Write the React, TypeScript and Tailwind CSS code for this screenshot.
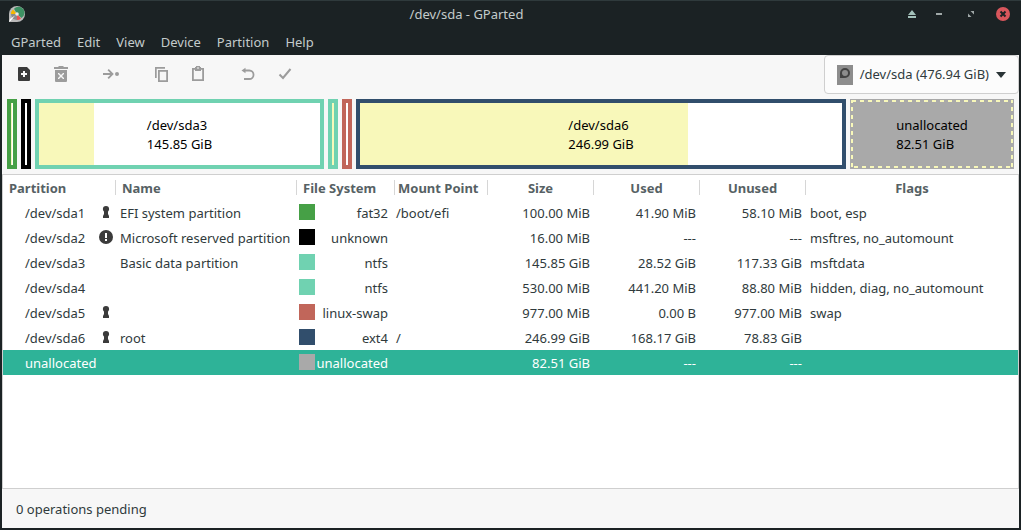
import React from "react";

type Row = {
  partition: string;
  mark?: "key" | "alert";
  name: string;
  swatch: string;
  fs: string;
  mount: string;
  size: string;
  used: string;
  unused: string;
  flags: string;
  selected?: boolean;
};

const rows: Row[] = [
  { partition: "/dev/sda1", mark: "key", name: "EFI system partition", swatch: "bg-[#46a046]", fs: "fat32", mount: "/boot/efi", size: "100.00 MiB", used: "41.90 MiB", unused: "58.10 MiB", flags: "boot, esp" },
  { partition: "/dev/sda2", mark: "alert", name: "Microsoft reserved partition", swatch: "bg-black", fs: "unknown", mount: "", size: "16.00 MiB", used: "---", unused: "---", flags: "msftres, no_automount" },
  { partition: "/dev/sda3", name: "Basic data partition", swatch: "bg-[#70d2b1]", fs: "ntfs", mount: "", size: "145.85 GiB", used: "28.52 GiB", unused: "117.33 GiB", flags: "msftdata" },
  { partition: "/dev/sda4", name: "", swatch: "bg-[#70d2b1]", fs: "ntfs", mount: "", size: "530.00 MiB", used: "441.20 MiB", unused: "88.80 MiB", flags: "hidden, diag, no_automount" },
  { partition: "/dev/sda5", mark: "key", name: "", swatch: "bg-[#c1665a]", fs: "linux-swap", mount: "", size: "977.00 MiB", used: "0.00 B", unused: "977.00 MiB", flags: "swap" },
  { partition: "/dev/sda6", mark: "key", name: "root", swatch: "bg-[#314e6c]", fs: "ext4", mount: "/", size: "246.99 GiB", used: "168.17 GiB", unused: "78.83 GiB", flags: "" },
  { partition: "unallocated", name: "", swatch: "bg-[#a9a9a9]", fs: "unallocated", mount: "", size: "82.51 GiB", used: "---", unused: "---", flags: "", selected: true },
];

const menus = ["GParted", "Edit", "View", "Device", "Partition", "Help"];

function AppIcon() {
  return (
    <svg width="16" height="16" viewBox="0 0 16 16" aria-hidden="true">
      <path d="M0 16V8a8 8 0 1 1 8 8z" fill="#b9b9b9" />
      <path d="M8 8 5 2.800A6 6 0 1 1 12.500 12z" fill="#3d9163" />
      <path d="M8 8 2 8A6 6 0 0 1 4 3.500z" fill="#f5b800" />
      <path d="M8 8l4 4.500A6 6 0 0 1 8 14z" fill="#f0524f" />
      <path d="M8 8H2A6 6 0 0 0 8 14z" fill="#8b8b8b" />
      <circle cx="8" cy="8" r="1.800" fill="#e8e8e8" />
      <path d="M0 16l1-3 5-3.500L2 14.500z" fill="#fff" />
    </svg>
  );
}

function TitleBar() {
  return (
    <header className="flex h-7 items-center bg-[#1b2224] pl-[9px] pr-2.5 shadow-[inset_0_1px_0_#2f3a3c]">
      <AppIcon />
      <h1 className="flex-1 pl-1 text-center text-[13px] leading-5 text-[#c3cbcb]">/dev/sda - GParted</h1>
      <div className="flex items-center gap-4">
        <div className="flex gap-[11px]">
          <button aria-label="Keep above" className="flex h-4 w-4 items-center justify-center">
            <svg width="8" height="8" viewBox="0 0 8 8"><path d="M4 0l4 5H0zM0 6h8v2H0z" fill="#a3c1ba" /></svg>
          </button>
          <button aria-label="Minimize" className="flex h-4 w-4 items-center justify-center">
            <svg width="6" height="8" viewBox="0 0 6 8"><path d="M0 3h6v2H0z" fill="#a0a8a8" /></svg>
          </button>
        </div>
        <button aria-label="Maximize" className="flex h-4 w-4 items-center justify-center">
          <svg width="6" height="6" viewBox="0 0 6 6"><path d="M2.500 0H6v3.500zM0 2.500V6h3.500z" fill="#a0a8a8" /></svg>
        </button>
        <button aria-label="Close" className="flex h-4 w-4 items-center justify-center">
          <svg width="14" height="14" viewBox="0 0 14 14"><circle cx="7" cy="7" r="7" fill="#d8565c" /><path d="M4.500 4.500l5 5M9.500 4.500l-5 5" stroke="#1b2224" strokeWidth="2" /></svg>
        </button>
      </div>
    </header>
  );
}

function ToolButton({ label, disabled, children }: { label: string; disabled?: boolean; children: React.ReactNode }) {
  return (
    <button
      aria-label={label}
      disabled={disabled}
      className="flex h-[38px] w-9 items-center justify-center text-[#3b3b3b] disabled:text-[#9c9c9c]"
    >
      <svg width="16" height="16" viewBox="0 0 16 16" fill="currentColor">{children}</svg>
    </button>
  );
}

function Toolbar() {
  return (
    <div className="flex h-[39px] items-start justify-between pl-1">
      <div className="flex gap-px">
        <ToolButton label="New">
          <path fillRule="evenodd" d="M3 1h8l3 3v10q0 1-1 1H3q-1 0-1-1V2q0-1 1-1zm4 4v2H5v2h2v2h2V9h2V7H9V5z" />
        </ToolButton>
        <ToolButton label="Delete" disabled>
          <path d="M1 1h4l1-1h4l1 1h4v2H1z" />
          <path fillRule="evenodd" d="M2 4h12v11q0 1-1 1H3q-1 0-1-1zm3 4 2 2-2 2v1h1l2-2 2 2h1v-1l-2-2 2-2V7h-1L8 9 6 7H5z" />
        </ToolButton>
        <span className="w-3" />
        <ToolButton label="Resize or move" disabled>
          <path d="M0 7h7.200L4.500 4.300 5.800 3l5 5-5 5-1.300-1.300L7.200 9H0z" />
          <circle cx="14" cy="8" r="2" />
        </ToolButton>
        <span className="w-3" />
        <ToolButton label="Copy" disabled>
          <path d="M2 1h10v1.700H3.700V12H2z" />
          <path fillRule="evenodd" d="M5 4h10v12H5zm1.800 1.800v8.400h6.400V5.800z" />
        </ToolButton>
        <ToolButton label="Paste" disabled>
          <path fillRule="evenodd" d="M2 2h3V1h1V0h4v1h1v1h3v13H2zm1.800 1.800v9.400h8.400V3.800H11V5H5V3.800zM7 1.500v1h2v-1z" />
        </ToolButton>
        <span className="w-3" />
        <ToolButton label="Undo" disabled>
          <path d="M1.500 4.500 5.500 1.700v5.600z" />
          <path d="M5 4.500h4.300a4.200 4.200 0 0 1 0 8.500H4" fill="none" stroke="currentColor" strokeWidth="1.800" />
        </ToolButton>
        <ToolButton label="Apply" disabled>
          <path d="M2.500 8.500l3.500 3.500 7.500-9" fill="none" stroke="currentColor" strokeWidth="2" />
        </ToolButton>
      </div>
      <button className="flex h-[39px] items-center gap-[7px] rounded-sm border border-[#cfcfcf] bg-[#fcfcfc] px-3">
        <svg width="16" height="20" viewBox="0 0 16 20" aria-hidden="true">
          <path d="M0 0h16v20H0z" fill="#8d8d8d" />
          <circle cx="8" cy="8" r="4" fill="none" stroke="#434343" strokeWidth="2" />
          <path d="M3 8v5h5l-2-2-2-3z" fill="#434343" />
        </svg>
        <span>/dev/sda (476.94 GiB)</span>
        <svg width="10" height="6" viewBox="0 0 10 6" aria-hidden="true"><path d="M0 0h10L5 6z" fill="#2a3436" /></svg>
      </button>
    </div>
  );
}

function DiskMap() {
  const slim = "flex w-2.5 shrink-0 border-4 bg-white";
  return (
    <div className="flex h-20 gap-1 px-[5px] pt-[5px] pb-[5px] text-black">
      <div className={`${slim} border-[#46a046]`}><span className="w-px bg-[#f8f8ba]" /></div>
      <div className={`${slim} border-black`} />
      <div className="grid min-w-0 flex-[281] grid-cols-[19.6%_1fr] border-4 border-[#70d2b1] bg-white">
        <span className="col-start-1 row-start-1 bg-[#f8f8ba]" />
        <p className="col-span-2 col-start-1 row-start-1 self-center justify-self-center pt-px">/dev/sda3<br />145.85 GiB</p>
      </div>
      <div className={`${slim} border-[#70d2b1]`}><span className="w-0.5 bg-[#f8f8ba]" /></div>
      <div className={`${slim} border-[#c1665a]`} />
      <div className="grid min-w-0 flex-[482] grid-cols-[68%_1fr] border-4 border-[#314e6c] bg-white">
        <span className="col-start-1 row-start-1 bg-[#f8f8ba]" />
        <p className="col-span-2 col-start-1 row-start-1 self-center justify-self-center pt-px">/dev/sda6<br />246.99 GiB</p>
      </div>
      <div className="grid min-w-0 flex-[162] place-items-center bg-[#a9a9a9] p-px">
        <svg className="col-start-1 row-start-1 h-full w-full" aria-hidden="true">
          <rect width="100%" height="100%" fill="none" stroke="#f8f8ba" strokeWidth="4" strokeDasharray="4 4" strokeDashoffset="-1" />
        </svg>
        <p className="col-start-1 row-start-1 pt-px">unallocated<br />82.51 GiB</p>
      </div>
    </div>
  );
}

function Mark({ kind }: { kind: "key" | "alert" }) {
  return kind === "key" ? (
    <svg width="16" height="16" viewBox="0 0 16 16" role="img" aria-label="Mounted">
      <circle cx="8" cy="5" r="3.100" fill="#3b3b3b" />
      <path d="M6 6.500h4V10l1 2v2H5v-2l1-2z" fill="#3b3b3b" />
    </svg>
  ) : (
    <svg width="16" height="16" viewBox="0 0 16 16" role="img" aria-label="Warning">
      <circle cx="8" cy="8" r="7" fill="#3b3b3b" />
      <path d="M7 4h2v5H7zM7 10h2v2H7z" fill="#fff" />
    </svg>
  );
}

const headers = [
  { label: "Partition", cls: "pl-1.5 text-left" },
  { label: "Name", cls: "pl-1.5 text-left" },
  { label: "File System", cls: "pl-1.5 text-left" },
  { label: "Mount Point", cls: "pl-[3px] text-left" },
  { label: "Size", cls: "text-center" },
  { label: "Used", cls: "text-center" },
  { label: "Unused", cls: "text-center" },
  { label: "Flags", cls: "text-center" },
];

function PartitionTable() {
  return (
    <div className="flex-1 border border-[#cfcfcf] bg-white">
      <table className="w-full table-fixed border-collapse whitespace-nowrap">
        <colgroup>
          <col className="w-[113px]" />
          <col className="w-[181px]" />
          <col className="w-[98px]" />
          <col className="w-[93px]" />
          <col className="w-[106px]" />
          <col className="w-[106px]" />
          <col className="w-[106px]" />
          <col />
        </colgroup>
        <thead>
          <tr className="h-[25px] text-[#566164]">
            {headers.map((h, i) => (
              <th key={h.label} className="p-0 font-bold">
                <div className={`h-[15px] leading-[17px] ${h.cls} ${i < 7 ? "border-r border-[#d6d6d6]" : ""}`}>{h.label}</div>
              </th>
            ))}
          </tr>
        </thead>
        <tbody>
          {rows.map((r) => (
            <tr key={r.partition} className={`h-[25px] ${r.selected ? "bg-[#2eb398] text-white" : ""}`}>
              <td className="p-0 pt-0.5">
                <div className="flex items-start justify-between pl-[22px] pr-0.5">
                  {r.partition}
                  {r.mark && <Mark kind={r.mark} />}
                </div>
              </td>
              <td className="p-0 pt-0.5 pl-1">{r.name}</td>
              <td className="p-0 pt-0.5">
                <div className="flex items-start justify-between pl-0.5 pr-[7px]">
                  <span className={`h-4 w-4 ${r.swatch}`} />
                  {r.fs}
                </div>
              </td>
              <td className="p-0 pt-0.5 pl-px">{r.mount}</td>
              <td className="p-0 pt-0.5 pr-1 text-right">{r.size}</td>
              <td className="p-0 pt-0.5 pr-1 text-right">{r.used}</td>
              <td className="p-0 pt-0.5 pr-1 text-right">{r.unused}</td>
              <td className="p-0 pt-0.5 pl-1">{r.flags}</td>
            </tr>
          ))}
        </tbody>
      </table>
    </div>
  );
}

export default function App() {
  return (
    <div className="flex min-h-screen flex-col bg-[#1b2224] font-['Noto_Sans',sans-serif] text-[13px] leading-[19px] text-[#2f3a3c]">
      <TitleBar />
      <nav className="flex h-[27px] items-center gap-4 px-[11px] pt-0.5 text-[#c3cbcb]">
        {menus.map((m) => (
          <button key={m}>{m}</button>
        ))}
      </nav>
      <main className="mx-0.5 mb-0.5 flex flex-1 flex-col bg-[#f7f7f7]">
        <Toolbar />
        <DiskMap />
        <PartitionTable />
        <footer className="flex h-[39px] items-center px-3.5 pt-0.5">0 operations pending</footer>
      </main>
    </div>
  );
}
